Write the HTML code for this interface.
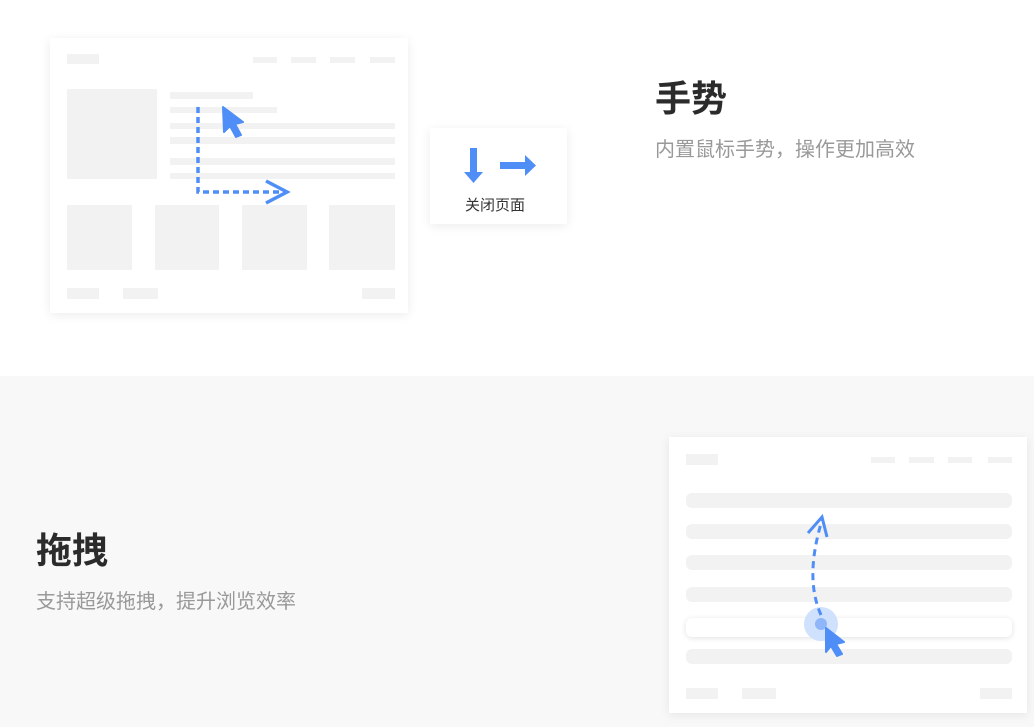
<!DOCTYPE html>
<html><head><meta charset="utf-8"><style>
*{margin:0;padding:0;box-sizing:border-box}
body{width:1034px;height:727px;overflow:hidden;background:#fff;font-family:"Liberation Sans","Noto Sans CJK SC",sans-serif;position:relative}
.a{position:absolute}
.g{position:absolute;background:#f2f2f2}
.card{position:absolute;background:#fff;box-shadow:0 2px 10px rgba(0,0,0,.08)}
h2{position:absolute;font-size:36px;font-weight:bold;color:#2b2b2b;line-height:1.2}
p.s{position:absolute;font-size:20px;color:#999;line-height:1.2}
</style></head><body>
<div class="a" style="left:0;top:376px;width:1034px;height:351px;background:#f8f8f8"></div>

<div class="card" style="left:50px;top:38px;width:358px;height:275px"></div>
<div class="g" style="left:67px;top:54px;width:32px;height:10px"></div>
<div class="g" style="left:253px;top:57px;width:24px;height:6px"></div>
<div class="g" style="left:291px;top:57px;width:25px;height:6px"></div>
<div class="g" style="left:330px;top:57px;width:25px;height:6px"></div>
<div class="g" style="left:370px;top:57px;width:25px;height:6px"></div>
<div class="g" style="left:67px;top:89px;width:90px;height:90px"></div>
<div class="g" style="left:170px;top:92px;width:83px;height:7px"></div>
<div class="g" style="left:170px;top:107px;width:107px;height:6px"></div>
<div class="g" style="left:170px;top:123px;width:225px;height:6px"></div>
<div class="g" style="left:170px;top:137px;width:225px;height:7px"></div>
<div class="g" style="left:170px;top:158px;width:225px;height:7px"></div>
<div class="g" style="left:170px;top:173px;width:225px;height:6px"></div>
<div class="g" style="left:67px;top:205px;width:65px;height:65px"></div>
<div class="g" style="left:155px;top:205px;width:64px;height:65px"></div>
<div class="g" style="left:242px;top:205px;width:65px;height:65px"></div>
<div class="g" style="left:329px;top:205px;width:66px;height:65px"></div>
<div class="g" style="left:67px;top:288px;width:32px;height:11px"></div>
<div class="g" style="left:123px;top:288px;width:35px;height:11px"></div>
<div class="g" style="left:362px;top:288px;width:33px;height:11px"></div>
<svg class="a" style="left:0;top:0" width="600" height="330">
<path d="M198 107 V192 H284" fill="none" stroke="#4f8ef7" stroke-width="3.5" stroke-dasharray="6 4"/>
<path d="M266 181 L287 192 L266 203" fill="none" stroke="#4f8ef7" stroke-width="3.5"/>
<path d="M223 107 L243 122 L235 124 L241 135 L236 137 L230 126 L224 132 Z" fill="#4f8ef7" stroke="#4f8ef7" stroke-width="2" stroke-linejoin="round"/>
</svg>

<div class="card" style="left:430px;top:128px;width:137px;height:96px"></div>
<svg class="a" style="left:430px;top:128px" width="137" height="96">
<rect x="40" y="20" width="7" height="25" fill="#4f8ef7"/>
<path d="M34 44 L53 44 L43.5 55 Z" fill="#4f8ef7"/>
<rect x="70" y="34" width="26" height="7" fill="#4f8ef7"/>
<path d="M95 27 L106 37.5 L95 48 Z" fill="#4f8ef7"/>
</svg>
<div class="a" style="left:428px;top:194px;width:134px;text-align:center;font-size:15px;color:#333">关闭页面</div>

<h2 style="left:655px;top:77px">手势</h2>
<p class="s" style="left:655px;top:138px">内置鼠标手势，操作更加高效</p>

<h2 style="left:36px;top:529px">拖拽</h2>
<p class="s" style="left:36px;top:590px">支持超级拖拽，提升浏览效率</p>

<div class="card" style="left:669px;top:437px;width:358px;height:276px"></div>
<div class="g" style="left:686px;top:454px;width:32px;height:11px"></div>
<div class="g" style="left:871px;top:457px;width:24px;height:6px"></div>
<div class="g" style="left:909px;top:457px;width:25px;height:6px"></div>
<div class="g" style="left:948px;top:457px;width:24px;height:6px"></div>
<div class="g" style="left:988px;top:457px;width:24px;height:6px"></div>
<div class="g" style="left:686px;top:493px;width:326px;height:15px;border-radius:6px"></div>
<div class="g" style="left:686px;top:524px;width:326px;height:15px;border-radius:6px"></div>
<div class="g" style="left:686px;top:555px;width:326px;height:15px;border-radius:6px"></div>
<div class="g" style="left:686px;top:587px;width:326px;height:15px;border-radius:6px"></div>
<div class="a" style="left:686px;top:618px;width:326px;height:19px;border-radius:6px;background:#fff;box-shadow:0 1px 6px rgba(0,0,0,.12)"></div>
<div class="g" style="left:686px;top:649px;width:326px;height:15px;border-radius:6px"></div>
<div class="g" style="left:686px;top:688px;width:32px;height:11px"></div>
<div class="g" style="left:742px;top:688px;width:34px;height:11px"></div>
<div class="g" style="left:980px;top:688px;width:32px;height:11px"></div>
<svg class="a" style="left:660px;top:430px" width="374" height="297">
<circle cx="161" cy="194" r="17" fill="#cfe1fd"/>
<circle cx="161" cy="194" r="6" fill="#8fb6f8"/>
<path d="M161 185 C150 160 150 130 162 90" fill="none" stroke="#4f8ef7" stroke-width="3" stroke-dasharray="7 5"/>
<path d="M148 103 L162 87 L167 107" fill="none" stroke="#4f8ef7" stroke-width="3"/>
<path d="M166 198 L184 212 L176 214 L182 224 L177 226 L171 216 L166 222 Z" fill="#4f8ef7" stroke="#4f8ef7" stroke-width="2" stroke-linejoin="round"/>
</svg>
</body></html>
